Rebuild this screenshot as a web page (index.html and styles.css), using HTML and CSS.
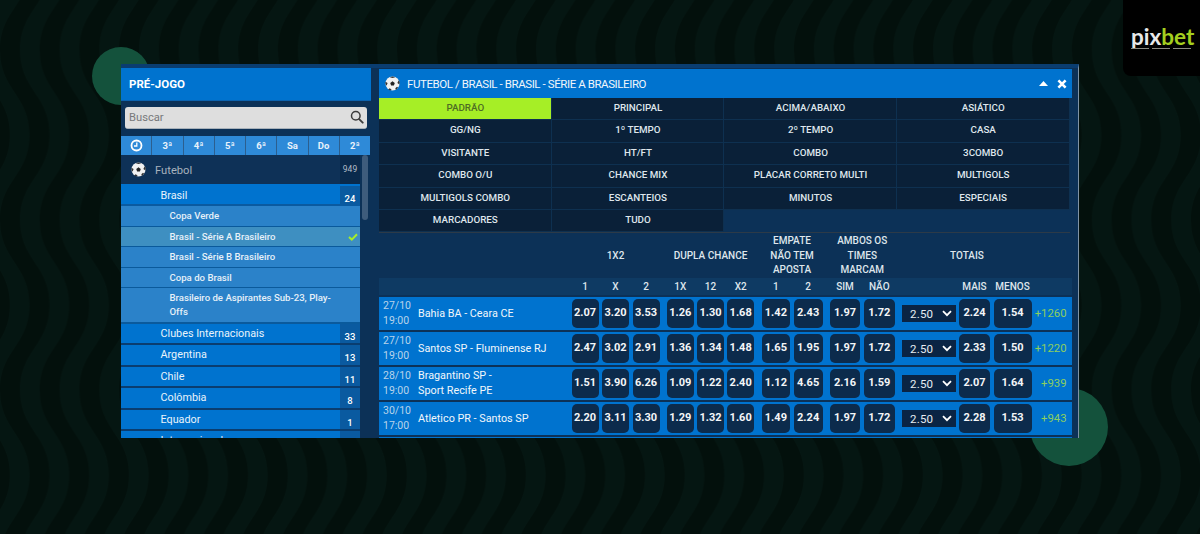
FILE: index.html
```html
<!DOCTYPE html>
<html lang="pt-BR">
<head>
    <meta charset="UTF-8">
    <title>Pixbet - Pré-jogo</title>
    <link rel="stylesheet" href="styles.css">
</head>
<body>
    <svg class="waves" width="1200" height="534" aria-hidden="true">
        <defs>
            <path id="wave" d="M29.5 -35 C29.5 5 0 10 0 50 C0 90 29.5 95 29.5 135 C29.5 175 0 180 0 220 L20 220 C20 180 49.5 175 49.5 135 C49.5 95 20 90 20 50 C20 10 49.5 5 49.5 -35 Z"/>
            <pattern id="wave-tile" width="39.7" height="170" patternUnits="userSpaceOnUse">
                <use href="#wave" x="-39.7"/>
                <use href="#wave"/>
                <use href="#wave" x="39.7"/>
            </pattern>
        </defs>
        <rect width="1200" height="534" fill="url(#wave-tile)"/>
    </svg>
    <div class="blob blob-left"></div>
    <div class="blob blob-right"></div>

    <div class="logo">
        <div class="logo-name"><span class="logo-pix">pix</span><span class="logo-bet">bet</span></div>
        <div class="logo-tag"><i></i><i></i><i></i></div>
    </div>

    <div class="window">
        <aside class="side">
            <div class="side-title">PRÉ-JOGO</div>
            <div class="search">
                <span>Buscar</span>
                <svg width="14" height="14" viewBox="0 0 15 15"><circle cx="6.2" cy="6.2" r="4.6" fill="none" stroke="#3c3c3c" stroke-width="1.6"/><path d="M9.8 9.8 L13.6 13.6" stroke="#3c3c3c" stroke-width="2" stroke-linecap="round"/></svg>
            </div>
            <div class="days">
                <div class="day"><svg width="13" height="13" viewBox="0 0 13 13"><circle cx="6.5" cy="6.5" r="5" fill="none" stroke="#fff" stroke-width="1.8"/><path d="M6.8 3.4 V7 H4" fill="none" stroke="#fff" stroke-width="1.3"/></svg></div>
                <div class="day">3ª</div>
                <div class="day">4ª</div>
                <div class="day">5ª</div>
                <div class="day">6ª</div>
                <div class="day">Sa</div>
                <div class="day">Do</div>
                <div class="day">2ª</div>
            </div>
            <div class="tree">
                <div class="tree-list">
                    <div class="sport">
                        <svg class="ball" width="15" height="15" viewBox="0 0 16 16"><use href="#ball-art"/></svg>
                        <span>Futebol</span>
                        <b class="sport-count">949</b>
                    </div>
                    <div class="league league-open"><span>Brasil</span><b class="count">24</b></div>
                    <div class="sub">Copa Verde</div>
                    <div class="sub sub-active">Brasil - Série A Brasileiro
                        <svg class="check" width="10" height="8" viewBox="0 0 10 8"><path d="M1 4 L3.8 6.6 L9 1.2" fill="none" stroke="#a6ee26" stroke-width="2"/></svg>
                    </div>
                    <div class="sub">Brasil - Série B Brasileiro</div>
                    <div class="sub">Copa do Brasil</div>
                    <div class="sub sub-tall">Brasileiro de Aspirantes Sub-23, Play-Offs</div>
                    <div class="league"><span>Clubes Internacionais</span><b class="count">33</b></div>
                    <div class="league"><span>Argentina</span><b class="count">13</b></div>
                    <div class="league"><span>Chile</span><b class="count">11</b></div>
                    <div class="league"><span>Colômbia</span><b class="count">8</b></div>
                    <div class="league"><span>Equador</span><b class="count">1</b></div>
                    <div class="league"><span>Internacional</span><b class="count">5</b></div>
                </div>
                <div class="scrollbar"><div class="thumb"></div></div>
            </div>
        </aside>

        <main class="main">
            <div class="main-title">
                <svg class="ball" width="15" height="15" viewBox="0 0 16 16">
                    <g id="ball-art">
                        <circle cx="8" cy="8" r="7.5" fill="#f1f1f1"/>
                        <path d="M8 5.6 L10.4 7.4 L9.5 10 H6.5 L5.6 7.4 Z" fill="#222"/>
                        <path d="M5 1.2 L8 2.2 L11 1.2 L8 0.4 Z M14.6 4.6 L13.2 7.4 L15.4 9 L15.6 6.4 Z M0.5 6.2 L2.8 7.4 L1.6 10.4 L0.5 8.6 Z M4.6 13 L7 14.2 L6 15.5 L3.6 14.6 Z M11 13 L12.8 11.4 L14 12.4 L11.6 15 Z" fill="#333"/>
                    </g>
                </svg>
                <span class="crumb">FUTEBOL / BRASIL - BRASIL - SÉRIE A BRASILEIRO</span>
                <svg class="caret" width="9" height="5" viewBox="0 0 9 5"><path d="M0 5 L4.5 0 L9 5 Z" fill="#fff"/></svg>
                <svg class="close" width="10" height="10" viewBox="0 0 10 10"><path d="M1.4 1.4 L8.6 8.6 M8.6 1.4 L1.4 8.6" stroke="#fff" stroke-width="2.6"/></svg>
            </div>

            <div class="tabs">
                <div class="tab tab-active">PADRÃO</div>
                <div class="tab">PRINCIPAL</div>
                <div class="tab">ACIMA/ABAIXO</div>
                <div class="tab">ASIÁTICO</div>
                <div class="tab">GG/NG</div>
                <div class="tab">1º TEMPO</div>
                <div class="tab">2º TEMPO</div>
                <div class="tab">CASA</div>
                <div class="tab">VISITANTE</div>
                <div class="tab">HT/FT</div>
                <div class="tab">COMBO</div>
                <div class="tab">3COMBO</div>
                <div class="tab">COMBO O/U</div>
                <div class="tab">CHANCE MIX</div>
                <div class="tab">PLACAR CORRETO MULTI</div>
                <div class="tab">MULTIGOLS</div>
                <div class="tab">MULTIGOLS COMBO</div>
                <div class="tab">ESCANTEIOS</div>
                <div class="tab">MINUTOS</div>
                <div class="tab">ESPECIAIS</div>
                <div class="tab">MARCADORES</div>
                <div class="tab">TUDO</div>
            </div>

            <div class="line head-groups">
                <div></div><div></div>
                <div class="group-name">1X2</div>
                <div class="group-name">DUPLA CHANCE</div>
                <div class="group-name">EMPATE<br>NÃO TEM<br>APOSTA</div>
                <div class="group-name">AMBOS OS<br>TIMES<br>MARCAM</div>
                <div class="group-name">TOTAIS</div>
            </div>
            <div class="line head-labels">
                <div></div><div></div>
                <div class="g"><span class="lbl">1</span><span class="lbl">X</span><span class="lbl">2</span></div>
                <div class="g"><span class="lbl">1X</span><span class="lbl">12</span><span class="lbl">X2</span></div>
                <div class="g"><span class="lbl">1</span><span class="lbl">2</span></div>
                <div class="g g-both"><span class="lbl">SIM</span><span class="lbl">NÃO</span></div>
                <div class="g g-totals"><span class="sel-space"></span><span class="lbl">MAIS</span><span class="lbl">MENOS</span></div>
            </div>

            <div class="line match">
                <div class="when">27/10<br>19:00</div>
                <div class="teams">Bahia BA - Ceara CE</div>
                <div class="g"><b class="odd">2.07</b><b class="odd">3.20</b><b class="odd">3.53</b></div>
                <div class="g"><b class="odd">1.26</b><b class="odd">1.30</b><b class="odd">1.68</b></div>
                <div class="g"><b class="odd">1.42</b><b class="odd">2.43</b></div>
                <div class="g g-both"><b class="odd">1.97</b><b class="odd">1.72</b></div>
                <div class="g g-totals">
                    <div class="sel">2.50<svg width="10" height="7" viewBox="0 0 10 7"><path d="M1 1.2 L5 5.2 L9 1.2" fill="none" stroke="#fff" stroke-width="1.8"/></svg></div>
                    <b class="odd">2.24</b><b class="odd">1.54</b>
                </div>
                <div class="more">+1260</div>
            </div>
            <div class="line match">
                <div class="when">27/10<br>19:00</div>
                <div class="teams">Santos SP - Fluminense RJ</div>
                <div class="g"><b class="odd">2.47</b><b class="odd">3.02</b><b class="odd">2.91</b></div>
                <div class="g"><b class="odd">1.36</b><b class="odd">1.34</b><b class="odd">1.48</b></div>
                <div class="g"><b class="odd">1.65</b><b class="odd">1.95</b></div>
                <div class="g g-both"><b class="odd">1.97</b><b class="odd">1.72</b></div>
                <div class="g g-totals">
                    <div class="sel">2.50<svg width="10" height="7" viewBox="0 0 10 7"><path d="M1 1.2 L5 5.2 L9 1.2" fill="none" stroke="#fff" stroke-width="1.8"/></svg></div>
                    <b class="odd">2.33</b><b class="odd">1.50</b>
                </div>
                <div class="more">+1220</div>
            </div>
            <div class="line match">
                <div class="when">28/10<br>19:00</div>
                <div class="teams">Bragantino SP -<br>Sport Recife PE</div>
                <div class="g"><b class="odd">1.51</b><b class="odd">3.90</b><b class="odd">6.26</b></div>
                <div class="g"><b class="odd">1.09</b><b class="odd">1.22</b><b class="odd">2.40</b></div>
                <div class="g"><b class="odd">1.12</b><b class="odd">4.65</b></div>
                <div class="g g-both"><b class="odd">2.16</b><b class="odd">1.59</b></div>
                <div class="g g-totals">
                    <div class="sel">2.50<svg width="10" height="7" viewBox="0 0 10 7"><path d="M1 1.2 L5 5.2 L9 1.2" fill="none" stroke="#fff" stroke-width="1.8"/></svg></div>
                    <b class="odd">2.07</b><b class="odd">1.64</b>
                </div>
                <div class="more">+939</div>
            </div>
            <div class="line match">
                <div class="when">30/10<br>17:00</div>
                <div class="teams">Atletico PR - Santos SP</div>
                <div class="g"><b class="odd">2.20</b><b class="odd">3.11</b><b class="odd">3.30</b></div>
                <div class="g"><b class="odd">1.29</b><b class="odd">1.32</b><b class="odd">1.60</b></div>
                <div class="g"><b class="odd">1.49</b><b class="odd">2.24</b></div>
                <div class="g g-both"><b class="odd">1.97</b><b class="odd">1.72</b></div>
                <div class="g g-totals">
                    <div class="sel">2.50<svg width="10" height="7" viewBox="0 0 10 7"><path d="M1 1.2 L5 5.2 L9 1.2" fill="none" stroke="#fff" stroke-width="1.8"/></svg></div>
                    <b class="odd">2.28</b><b class="odd">1.53</b>
                </div>
                <div class="more">+943</div>
            </div>
            <div class="next-match"></div>
        </main>
    </div>
</body>
</html>
```

FILE: styles.css
```css
* {
    margin: 0;
    padding: 0;
    box-sizing: border-box;
    font-family: 'Roboto', 'Liberation Sans', sans-serif;
}

body {
    background: #051612;
    color: #fff;
    width: 1200px;
    height: 534px;
    overflow: hidden;
    position: relative;
    padding: 64px 0 0 121px;
}

/* Background decoration */
.waves {
    position: absolute;
    top: 0;
    left: 0;
}

#wave {
    fill: #03100c;
}

.blob {
    position: absolute;
    border-radius: 50%;
    background: #14523c;
}

.blob-left {
    left: 92px;
    top: 47px;
    width: 58px;
    height: 58px;
}

.blob-right {
    left: 1030px;
    top: 388px;
    width: 78px;
    height: 78px;
}

.logo {
    position: absolute;
    top: 0;
    right: 0;
    width: 77px;
    height: 76px;
    background: #000;
    border-bottom-left-radius: 8px;
    padding: 26px 0 0 8px;
}

.logo-name {
    font-family: 'Lato', sans-serif;
    font-size: 22.5px;
    font-weight: 700;
    line-height: 22px;
    white-space: nowrap;
}

.logo-pix {
    font-family: inherit;
    color: #e8e8e8;
}

.logo-bet {
    font-family: inherit;
    color: #a4cf1f;
}

.logo-tag {
    display: flex;
    gap: 3px;
}

.logo-tag i {
    width: 18px;
    height: 1px;
    background: #8a8a80;
}

/* Window */
.window {
    position: relative;
    width: 958px;
    height: 374px;
    display: flex;
    align-items: flex-start;
    background: #0c3157;
    border-top: 4px solid #0a3d70;
    border-right: 1px solid #7f93a5;
    overflow: hidden;
}

.side {
    width: 250px;
    flex: none;
    margin-right: 8px;
}

.side-title {
    height: 32.5px;
    background: #0073cf;
    border-bottom: 1px solid #0b63b0;
    font-size: 11.5px;
    font-weight: 700;
    line-height: 32px;
    padding-left: 8px;
}

.search {
    margin: 6.5px 4px 0 3.5px;
    height: 21.5px;
    background: #dedede;
    border-radius: 3px;
    border-bottom: 1px solid #a9b2ba;
    display: flex;
    align-items: center;
    justify-content: space-between;
    padding: 0 3px 0 4.5px;
    color: #77797b;
    font-size: 11.2px;
}

.days {
    margin: 7.5px 1px 0 0;
    height: 19px;
    display: flex;
    gap: 1px;
    background: #2c5f8f;
}

.day {
    flex: 1;
    background: #2e8ad8;
    font-size: 9.5px;
    font-weight: 700;
    display: flex;
    align-items: center;
    justify-content: center;
    color: #e8f2fb;
}

.tree {
    display: flex;
}

.tree-list {
    width: 239px;
    flex: none;
}

.scrollbar {
    flex: 1;
    padding: 0 2px;
}

.thumb {
    width: 6px;
    height: 65px;
    border-radius: 3px;
    background: #3e5c7c;
}

.sport {
    height: 31px;
    display: flex;
    align-items: center;
    background: #0e3157;
    border-bottom: 2px solid #0073cf;
    padding-left: 10px;
    color: #a7b2bd;
    font-size: 11.2px;
}

.sport span {
    margin: 1px 0 0 9px;
}

.sport-count {
    margin-left: auto;
    width: 20px;
    height: 29px;
    background: #0a2a4c;
    font-size: 8.5px;
    font-weight: 400;
    line-height: 29px;
    text-align: center;
    color: #b3bec8;
}

.ball {
    flex: none;
}

.league {
    height: 21.4px;
    display: flex;
    background: #0073cf;
    border-bottom: 2px solid #0a3d70;
    padding-left: 39.5px;
    font-size: 10.8px;
    line-height: 19px;
    color: #e9f3fb;
}

.league-open {
    height: 20px;
    border-bottom-color: #0a5aa0;
}

.count {
    margin-left: auto;
    width: 20px;
    background: #0a5aa0;
    font-size: 9.5px;
    font-weight: 500;
    line-height: 25px;
    height: 19.4px;
    text-align: center;
    color: #fff;
}

.sub {
    position: relative;
    height: 20.5px;
    background: #2b82c9;
    border-bottom: 1px solid #0a5a9c;
    padding: 0 20px 0 48.5px;
    font-size: 9.6px;
    font-weight: 500;
    line-height: 19.5px;
    color: #e6f0f8;
}

.sub-active {
    background: #3e8fc1;
}

.sub-tall {
    height: 36px;
    line-height: 14.3px;
    padding-top: 3px;
    border-bottom: 2px solid #0a5a9c;
}

.check {
    position: absolute;
    right: 2px;
    top: 6px;
}

/* Main column */
.main {
    width: 693px;
    flex: none;
    margin-top: 1px;
}

.main-title {
    height: 29px;
    background: #0073cf;
    display: flex;
    align-items: center;
    padding-left: 6px;
}

.crumb {
    margin-left: 7px;
    font-size: 11.5px;
    letter-spacing: -0.42px;
    color: #f0f6fb;
}

.caret {
    margin-left: auto;
}

.close {
    margin: 0 5px 0 9px;
}

.tabs {
    width: 690.5px;
    display: grid;
    grid-template-columns: repeat(4, 1fr);
    grid-auto-rows: 22.4px;
    border-bottom: 1px solid #2c3a48;
    background: #0c3157;
}

.tab {
    background: #0a2038;
    border-right: 1px solid #0e3050;
    border-bottom: 1px solid #0e3050;
    font-size: 9.8px;
    font-weight: 500;
    line-height: 20.5px;
    padding-left: 1px;
    text-align: center;
    color: #dfe6ec;
}

.tab-active {
    background: #a6ee26;
    color: #4e6c24;
}

/* Odds table */
.line {
    display: grid;
    grid-template-columns: 39px 153.5px 95.5px 94.5px 68.5px 72px 130px 40px;
}

.head-groups {
    height: 45px;
    align-items: center;
}

.group-name {
    padding-right: 7.5px;
    font-size: 10px;
    font-weight: 500;
    line-height: 14.3px;
    text-align: center;
    color: #dfe6ec;
}

.head-groups .group-name:last-child {
    padding-right: 0;
}

.head-labels {
    height: 17px;
    margin-bottom: 2px;
    background: #0e3a63;
    align-items: center;
}

.g {
    display: flex;
    gap: 3.5px;
    padding-right: 7.5px;
}

.g-both {
    padding-right: 7px;
}

.g-both > :last-child {
    flex: 0 0 31.5px;
}

.g-totals {
    padding-right: 0;
    align-items: center;
}

.g-totals > :last-child {
    flex: 0 0 38px;
}

.g-totals > :nth-child(2) {
    flex: 0 0 31px;
}

.sel-space {
    flex: 0 0 53.5px;
}

.lbl {
    flex: 1;
    font-size: 10px;
    font-weight: 500;
    text-align: center;
    color: #dfe6ec;
}

.match {
    height: 35px;
    padding: 2px 0 3px;
    background: #0073cf;
    border-bottom: 2px solid #0c3157;
    align-items: stretch;
}

.when {
    padding: 1px 0 0 4px;
    margin-top: -2px;
    font-size: 10.5px;
    line-height: 15px;
    color: #b9d3ea;
}

.teams {
    align-self: center;
    font-size: 10.8px;
    line-height: 14.5px;
    color: #f2f7fb;
}

.odd {
    flex: 1;
    height: 29px;
    background: #0c2b4c;
    border-radius: 5px;
    font-size: 11px;
    font-weight: 700;
    line-height: 28px;
    text-align: center;
    color: #f4f6f8;
}

.sel {
    flex: 0 0 53.5px;
    height: 17px;
    background: #0a2444;
    display: flex;
    align-items: center;
    justify-content: space-between;
    padding: 0 4px 0 8px;
    font-size: 11.5px;
    letter-spacing: 0.2px;
    color: #e6ecf2;
}

.more {
    align-self: center;
    padding-right: 5.5px;
    font-size: 11.3px;
    text-align: right;
    color: #8ccf5e;
}

.next-match {
    height: 4px;
    background: #0073cf;
}
```
